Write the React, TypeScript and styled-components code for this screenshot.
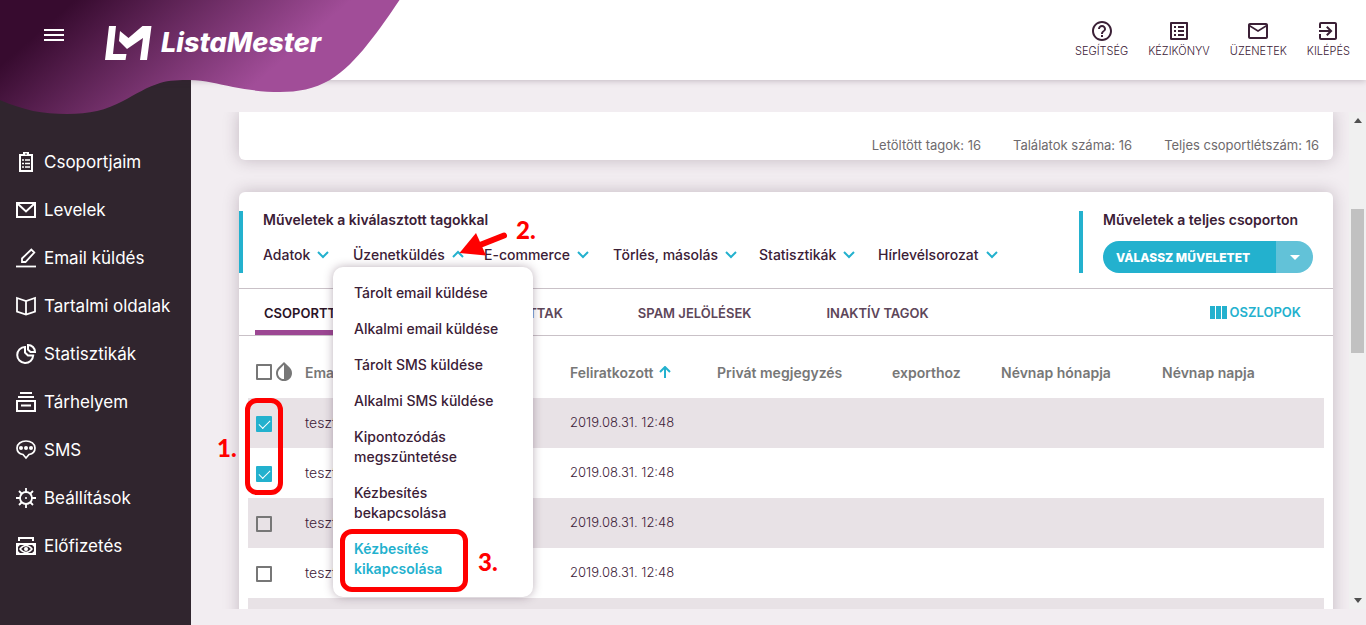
import React from "react";
import styled, { createGlobalStyle, css } from "styled-components";
import {
  MdExitToApp,
  MdHelpOutline,
  MdInvertColors,
  MdListAlt,
  MdMailOutline,
} from "react-icons/md";

const c = {
  cyan: "#23b1ce",
  cyanLight: "#62c2d8",
  ink: "#3b2036",
  side: "#30252e",
  page: "#f2edf1",
  stripe: "#e8e2e6",
  line: "#c9c1c7",
  grey: "#777777",
  purple: "#9c4793",
  red: "#ff0000",
};

const Global = createGlobalStyle`
  *, *::before, *::after { box-sizing: border-box; }
  body { margin: 0; background: ${c.page}; color: ${c.ink}; font-family: Inter, "Open Sans", sans-serif; font-size: 13px; }
  button { font: inherit; color: inherit; background: none; border: 0; padding: 0; cursor: pointer; text-align: left; }
  a { color: inherit; text-decoration: none; }
  svg { display: block; flex: none; }
`;

const Page = styled.div`
  height: 100vh;
  display: flex;
  flex-direction: column;
  overflow: hidden;
`;

const Header = styled.header`
  position: relative;
  z-index: 5;
  flex: none;
  height: 80px;
  display: flex;
  justify-content: space-between;
  background: #fff;
  box-shadow: 0 1px 6px rgba(60, 30, 55, 0.25);
`;

const Blob = styled.svg`
  position: absolute;
  left: 0;
  top: 0;
`;

const Brand = styled.div`
  position: relative;
  display: flex;
  align-items: flex-start;
  padding: 24px 0 0 44px;
  color: #fff;
`;

const MenuButton = styled.button`
  width: 20px;
  height: 22px;
  margin-right: 40px;
  display: flex;
  align-items: center;
`;

const Logo = styled.a`
  display: flex;
  align-items: center;
  gap: 9px;
  font-size: 27px;
  line-height: 38px;
  font-weight: 800;
  font-style: italic;
`;

const TopLinks = styled.nav`
  display: flex;
  gap: 20px;
  padding: 19px 16px 0 0;
`;

const TopLink = styled.a`
  display: flex;
  flex-direction: column;
  align-items: center;
  font-size: 11px;
  line-height: 17px;
  font-weight: 300;
`;

const Body = styled.div`
  flex: 1;
  min-height: 0;
  display: flex;
`;

const Sidebar = styled.nav`
  flex: none;
  width: 191px;
  padding-top: 58px;
  background: ${c.side};
`;

const SideLink = styled.a`
  height: 48px;
  display: flex;
  align-items: center;
  gap: 8px;
  padding: 0 0 0 16px;
  color: #fff;
  font-size: 17px;
  white-space: nowrap;
  svg { width: 20px; height: 20px; }
`;

const SideList = styled.div`
  display: flex;
  flex-direction: column;
`;

const Main = styled.main`
  flex: 1;
  min-width: 0;
  display: flex;
  padding: 32px 0 16px;
`;

const Pane = styled.div`
  flex: 1;
  min-width: 0;
  overflow: hidden;
  padding: 0 16px 0 48px;
`;

const Track = styled.div`
  flex: none;
  width: 17px;
  display: flex;
  flex-direction: column;
  align-items: center;
  justify-content: space-between;
  background: #f0f0f0;
  padding: 6px 0;
`;

const Thumb = styled.div`
  width: 13px;
  height: 144px;
  margin-bottom: 159px;
  background: #c1c1c1;
`;

const Card = styled.section`
  position: relative;
  background: #fff;
  border-radius: 6px;
  box-shadow: 0 0 16px rgba(60, 30, 55, 0.25);
`;

const Totals = styled(Card)`
  height: 48px;
  border-radius: 0 0 6px 6px;
  margin-bottom: 32px;
  padding: 24px 14px 0 0;
  display: flex;
  justify-content: flex-end;
  gap: 32px;
  line-height: 18px;
  color: #6e6a6d;
`;

const Actions = styled.div`
  display: flex;
  justify-content: space-between;
  padding: 19px 0 15px;
  border-bottom: 1px solid ${c.line};
`;

const Group = styled.div`
  height: 62px;
  border-left: 4px solid ${c.cyan};
  padding: 0 20px;
`;

const GroupTitle = styled.h2`
  margin: 0;
  font-size: 14px;
  line-height: 18px;
  font-weight: 600;
`;

const EndGroup = styled(Group)`
  width: 254px;
  white-space: nowrap;
`;

const Menus = styled.div`
  display: grid;
  grid-template-columns: 90px 131px 129px 146px 119px auto;
  margin-top: 12px;
`;

const MenuItem = styled.div`
  position: relative;
`;

const MenuToggle = styled.button`
  display: flex;
  align-items: center;
  gap: 6px;
  height: 26px;
  font-size: 14px;
  font-weight: 500;
  white-space: nowrap;
`;

const Dropdown = styled.div`
  position: absolute;
  z-index: 2;
  left: -20px;
  top: 26px;
  width: 200px;
  padding: 8px 0 10px;
  display: flex;
  flex-direction: column;
  background: #fff;
  border-radius: 10px;
  box-shadow: 0 0 10px rgba(60, 30, 55, 0.35);
`;

const DropItem = styled.button<{ $on?: boolean }>`
  padding: 8px 70px 8px 21px;
  font-size: 14px;
  line-height: 20px;
  font-weight: 500;
  ${(p) => p.$on ? css`color: ${c.cyan}; font-weight: 600;` : ""}
`;

const WideDropItem = styled(DropItem)`
  padding-right: 10px;
`;

const Split = styled.div`
  display: flex;
  width: 210px;
  height: 32px;
  margin-top: 12px;
  border-radius: 16px;
  overflow: hidden;
  color: #fff;
`;

const SplitMain = styled.button`
  flex: 1;
  padding-left: 13px;
  background: ${c.cyan};
  font-size: 12px;
  font-weight: 800;
`;

const SplitArrow = styled.button`
  width: 37px;
  display: flex;
  align-items: center;
  justify-content: center;
  background: ${c.cyanLight};
`;

const Tabs = styled.div`
  display: flex;
  align-items: stretch;
  height: 47px;
  padding: 0 32px 0 16px;
  border-bottom: 1px solid ${c.line};
`;

const Tab = styled.button<{ $on?: boolean }>`
  padding: 7px 9px 0;
  margin-right: 57px;
  font-weight: 600;
  color: ${(p) => (p.$on ? "#2a1326" : "#5d4659")};
  border-bottom: 5px solid ${(p) => (p.$on ? c.purple : "transparent")};
`;

const Columns = styled.button`
  margin-left: auto;
  display: flex;
  align-items: center;
  gap: 2px;
  color: ${c.cyan};
  font-weight: 600;
`;

const TableWrap = styled.div`
  padding: 12px 9px 0;
`;

const Table = styled.table`
  width: 100%;
  table-layout: fixed;
  border-collapse: collapse;
  th, td { padding: 0 8px 2px; text-align: left; white-space: nowrap; }
  th { height: 50px; font-size: 14px; font-weight: 600; color: ${c.grey}; }
  td { height: 50px; font-size: 14px; font-weight: 300; }
  tbody tr:nth-child(odd) { background: ${c.stripe}; }
  td.check { padding: 2px 8px 0; }
  td.date { font-size: 13px; }
`;

const Col = styled.col<{ $w?: number }>`
  width: ${(p) => (p.$w ? p.$w + "px" : "auto")};
`;

const HeadCell = styled.span<{ $gap: number }>`
  display: flex;
  align-items: center;
  gap: ${(p) => p.$gap}px;
`;

const Check = styled.input`
  appearance: none;
  display: block;
  flex: none;
  width: 16px;
  height: 16px;
  margin: 0;
  border: 2px solid ${c.grey};
  border-radius: 1px;
  &:checked {
    border: 0;
    background: ${c.cyan};
  }
  &:checked::after {
    content: "";
    display: block;
    width: 11px;
    height: 6px;
    margin: 4px 0 0 3px;
    border: solid #fff;
    border-width: 0 0 1px 1px;
    transform: rotate(-45deg);
  }
`;

const Frame = styled.div<{ $x: number; $y: number; $w: number; $h: number }>`
  position: absolute;
  z-index: 3;
  left: ${(p) => p.$x}px;
  top: ${(p) => p.$y}px;
  width: ${(p) => p.$w}px;
  height: ${(p) => p.$h}px;
  border: 5px solid ${c.red};
  border-radius: 12px;
  pointer-events: none;
`;

const Step = styled.span<{ $x: number; $y: number }>`
  position: absolute;
  z-index: 3;
  left: ${(p) => p.$x}px;
  top: ${(p) => p.$y}px;
  color: ${c.red};
  font: 900 24px/28px Lato, "Open Sans", sans-serif;
`;

const Arrow = styled.svg`
  position: absolute;
  z-index: 3;
  left: 219px;
  top: 38px;
  pointer-events: none;
`;

const Chevron = ({ up = false }: { up?: boolean }) => (
  <svg width="14" height="10" viewBox="0 0 14 10" fill="none" stroke={c.cyan} strokeWidth="2">
    <path d={up ? "M2 8l5-5 5 5" : "M2 3l5 5 5-5"} />
  </svg>
);

const SortArrow = () => (
  <svg width="12" height="12" viewBox="0 0 12 12" fill="none" stroke={c.cyan} strokeWidth="2">
    <path d="M6 12V2M1 6l5-5 5 5" />
  </svg>
);

const Line = ({ children }: { children: React.ReactNode }) => (
  <svg viewBox="0 0 20 20" fill="none" stroke="#fff" strokeWidth="2">{children}</svg>
);

const sideItems = [
  { label: "Csoportjaim", icon: <Line><path d="M4 3h12v16H4z" /><path d="M7 0h6v4H7z" fill="#fff" stroke="none" /><path d="M9 2h2" stroke={c.side} strokeWidth="1" /><path d="M6 8h2M9 8h5M6 11.500h2M9 11.500h5M6 15h2M9 15h5" strokeWidth="1.500" /></Line> },
  { label: "Levelek", icon: <Line><path d="M1 3h18v14H1z" /><path d="M2 4l8 7.500L18 4" /></Line> },
  { label: "Email küldés", icon: <Line><path d="M0 18.500h20" strokeWidth="1.800" /><path d="M6 14v-3.500L15.300 1.500l3 3L9.500 14z" strokeWidth="1.800" /></Line> },
  { label: "Tartalmi oldalak", icon: <Line><path d="M1 2l9 3 9-3v13.500l-9 3-9-3zM10 5v13" strokeWidth="1.800" /></Line> },
  { label: "Statisztikák", icon: <Line><path d="M9 3A8 8 0 1 0 17.200 11.500H12L9 8.500z" /><path d="M12 1a7 7 0 0 1 7 7h-4.500L12 5.500z" /></Line> },
  { label: "Tárhelyem", icon: <Line><path d="M4 1h12M2 5h16M1 9h18v10H1zM5 13.500h10" /></Line> },
  { label: "SMS", icon: <Line><path d="M10 1c5 0 9 2.800 9 7s-3 6-6 6.500L10 18l-3-3.500C4 14 1 12 1 8s4-7 9-7z" strokeWidth="1.700" /><g fill="#fff" stroke="none"><circle cx="5" cy="8" r="2" /><circle cx="10" cy="8" r="2" /><circle cx="15" cy="8" r="2" /></g></Line> },
  { label: "Beállítások", icon: <Line><circle cx="10" cy="10" r="6" strokeWidth="1.800" /><path d="M10 0v4M10 16v4M0 10h4M16 10h4M3 3l3 3M14 14l3 3M17 3l-3 3M6 14l-3 3" strokeWidth="1.800" /><circle cx="10" cy="10" r="1" fill="#fff" stroke="none" /></Line> },
  { label: "Előfizetés", icon: <Line><path d="M3 5V2h14v3M1 8h18v10H1z" /><path d="M4 13q6-7 12 0q-6 7-12 0z" strokeWidth="1.500" /><circle cx="10" cy="13" r="2" fill="#fff" stroke="none" /><path d="M1 11l3-3M16 8l3 3M1 15l3 3M16 18l3-3" strokeWidth="1.200" /></Line> },
];

const topItems = [
  { label: "SEGÍTSÉG", Icon: MdHelpOutline },
  { label: "KÉZIKÖNYV", Icon: MdListAlt },
  { label: "ÜZENETEK", Icon: MdMailOutline },
  { label: "KILÉPÉS", Icon: MdExitToApp },
];

const menus = ["Adatok", "Üzenetküldés", "E-commerce", "Törlés, másolás", "Statisztikák", "Hírlevélsorozat"];
const wideActions = ["Tárolt email küldése", "Alkalmi email küldése", "Tárolt SMS küldése", "Alkalmi SMS küldése"];
const actions = ["Kipontozódás megszüntetése", "Kézbesítés bekapcsolása", "Kézbesítés kikapcsolása"];
const tabs = ["CSOPORTTAGOK", "LEIRATKOZOTTAK", "SPAM JELÖLÉSEK", "INAKTÍV TAGOK"];
const rows = [1, 2, 3, 4, 5];

export default function App() {
  return (
    <Page>
      <Global />
      <Header>
        <Blob width="400" height="116" viewBox="0 0 400 116" aria-hidden="true">
          <defs>
            <linearGradient id="blob" gradientUnits="userSpaceOnUse" x1="33" y1="37" x2="153" y2="174">
              <stop offset="0" stopColor="#370b2f" />
              <stop offset="1" stopColor="#a14d98" />
            </linearGradient>
          </defs>
          <path fill="url(#blob)" d="M0 0H399.500C390 14 380 29 367 45C356 59 344 71 330 80C314 89 298 92 280 92C264 92 248 90 233 87C218 84 205 80 190 80C180 80 169 80 160 83C147 87 136 94 123 101C115 105 106 109 97 111C88 113 78 114 67 114C55 114 44 113 33 111C22 108 11 105 0 100Z" />
        </Blob>
        <Brand>
          <MenuButton aria-label="Menü">
            <svg width="20" height="12" viewBox="0 0 20 12" fill="#fff"><path d="M0 0h20v2H0zM0 5h20v2H0zM0 10h20v2H0z" /></svg>
          </MenuButton>
          <Logo href="#">
            <svg width="48" height="38" viewBox="0 0 48 38" fill="#fff">
              <path d="M5 2h7L9 30h13.500l-1 6H1z" />
              <path d="M16 7l8.500 7L38.500 2h9L43 36h-7l3-22L23 25l-8-8z" />
            </svg>
            ListaMester
          </Logo>
        </Brand>
        <TopLinks>
          {topItems.map(({ label, Icon }) => (
            <TopLink href="#" key={label}><Icon size={24} />{label}</TopLink>
          ))}
        </TopLinks>
      </Header>
      <Body>
        <Sidebar>
          <SideList>
            {sideItems.map((s) => (
              <SideLink href="#" key={s.label}>{s.icon}{s.label}</SideLink>
            ))}
          </SideList>
        </Sidebar>
        <Main>
          <Pane>
            <Totals>
              <span>Letöltött tagok: 16</span>
              <span>Találatok száma: 16</span>
              <span>Teljes csoportlétszám: 16</span>
            </Totals>
            <Card>
              <Actions>
                <Group>
                  <GroupTitle>Műveletek a kiválasztott tagokkal</GroupTitle>
                  <Menus>
                    {menus.map((m, i) => (
                      <MenuItem key={m}>
                        <MenuToggle aria-expanded={i === 1}>{m}<Chevron up={i === 1} /></MenuToggle>
                        {i === 1 && (
                          <Dropdown>
                            {wideActions.map((a) => <WideDropItem key={a}>{a}</WideDropItem>)}
                            {actions.map((a, n) => <DropItem key={a} $on={n === 2}>{a}</DropItem>)}
                            <Frame $x={7} $y={262} $w={128} $h={63} />
                            <Step $x={145} $y={281}>3.</Step>
                          </Dropdown>
                        )}
                      </MenuItem>
                    ))}
                  </Menus>
                </Group>
                <EndGroup>
                  <GroupTitle>Műveletek a teljes csoporton</GroupTitle>
                  <Split>
                    <SplitMain>VÁLASSZ MŰVELETET</SplitMain>
                    <SplitArrow aria-label="Műveletek listája">
                      <svg width="10" height="5" viewBox="0 0 10 5" fill="#fff"><path d="M0 0h10L5 5z" /></svg>
                    </SplitArrow>
                  </Split>
                </EndGroup>
              </Actions>
              <Tabs>
                {tabs.map((t, i) => <Tab key={t} $on={i === 0}>{t}</Tab>)}
                <Columns>
                  <svg width="18" height="13" viewBox="0 0 18 13" fill={c.cyan}><path d="M0 0h5v13H0zM6 0h5v13H6zM12 0h5v13h-5z" /></svg>
                  OSZLOPOK
                </Columns>
              </Tabs>
              <TableWrap>
                <Table>
                  <colgroup>
                    <Col $w={49} /><Col $w={265} /><Col $w={147} /><Col $w={175} /><Col $w={109} /><Col $w={161} /><Col />
                  </colgroup>
                  <thead>
                    <tr>
                      <th><HeadCell $gap={0}><Check type="checkbox" aria-label="Összes kijelölése" /><MdInvertColors size={24} /></HeadCell></th>
                      <th>Email</th>
                      <th><HeadCell $gap={6}>Feliratkozott <SortArrow /></HeadCell></th>
                      <th>Privát megjegyzés</th>
                      <th>exporthoz</th>
                      <th>Névnap hónapja</th>
                      <th>Névnap napja</th>
                    </tr>
                  </thead>
                  <tbody>
                    {rows.map((r) => (
                      <tr key={r}>
                        <td className="check"><Check type="checkbox" defaultChecked={r < 3} aria-label={"Tag kijelölése " + r} /></td>
                        <td>teszt{r}</td>
                        <td className="date">2019.08.31. 12:48</td>
                        <td /><td /><td /><td />
                      </tr>
                    ))}
                  </tbody>
                </Table>
              </TableWrap>
              <Arrow width="52" height="30" viewBox="0 0 52 30">
                <path d="M46 5.500L22 15" stroke={c.red} strokeWidth="6" strokeLinecap="round" />
                <path d="M1.500 23L18 3L28 25.500Z" fill={c.red} />
              </Arrow>
              <Step $x={277} $y={24}>2.</Step>
              <Frame $x={6} $y={206} $w={38} $h={97} />
              <Step $x={-22} $y={242}>1.</Step>
            </Card>
          </Pane>
          <Track aria-hidden="true">
            <svg width="8" height="5" viewBox="0 0 8 5" fill="#505050"><path d="M0 5h8L4 0z" /></svg>
            <Thumb />
            <svg width="8" height="5" viewBox="0 0 8 5" fill="#505050"><path d="M0 0h8L4 5z" /></svg>
          </Track>
        </Main>
      </Body>
    </Page>
  );
}
